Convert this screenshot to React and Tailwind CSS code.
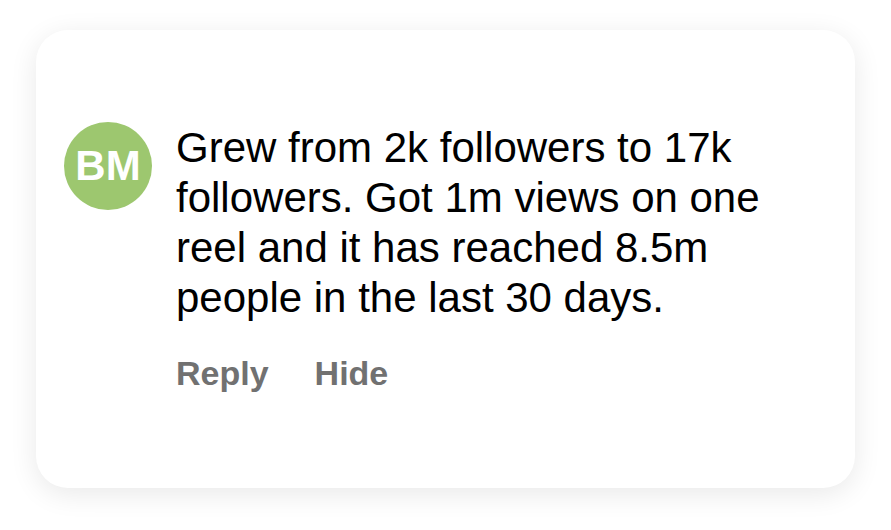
export default function App() {
  return (
    <div className="w-[891px] h-[530px] bg-white pt-[30px] pl-[36px]" style={{ fontFamily: '"Liberation Sans", Arial, sans-serif' }}>
      <div className="w-[819px] h-[458px] rounded-[32px] bg-white shadow-[0_6px_28px_rgba(0,0,0,0.09)] pl-[28px] pt-[92px]">
        <div className="flex gap-[24px]">
          <div className="w-[88px] h-[88px] shrink-0 rounded-full bg-[#9dc76f] flex items-center justify-center text-white font-bold text-[42px] leading-none">
            BM
          </div>
          <div className="mt-[1px]">
            <p className="text-black text-[42px] leading-[50px] w-[640px]">
              Grew from 2k followers to 17k followers. Got 1m views on one reel and it has reached 8.5m people in the last 30 days.
            </p>
            <div className="flex gap-[46px] mt-[30px] text-[#717171] font-bold text-[34px] leading-[40px]">
              <span>Reply</span>
              <span>Hide</span>
            </div>
          </div>
        </div>
      </div>
    </div>
  );
}
